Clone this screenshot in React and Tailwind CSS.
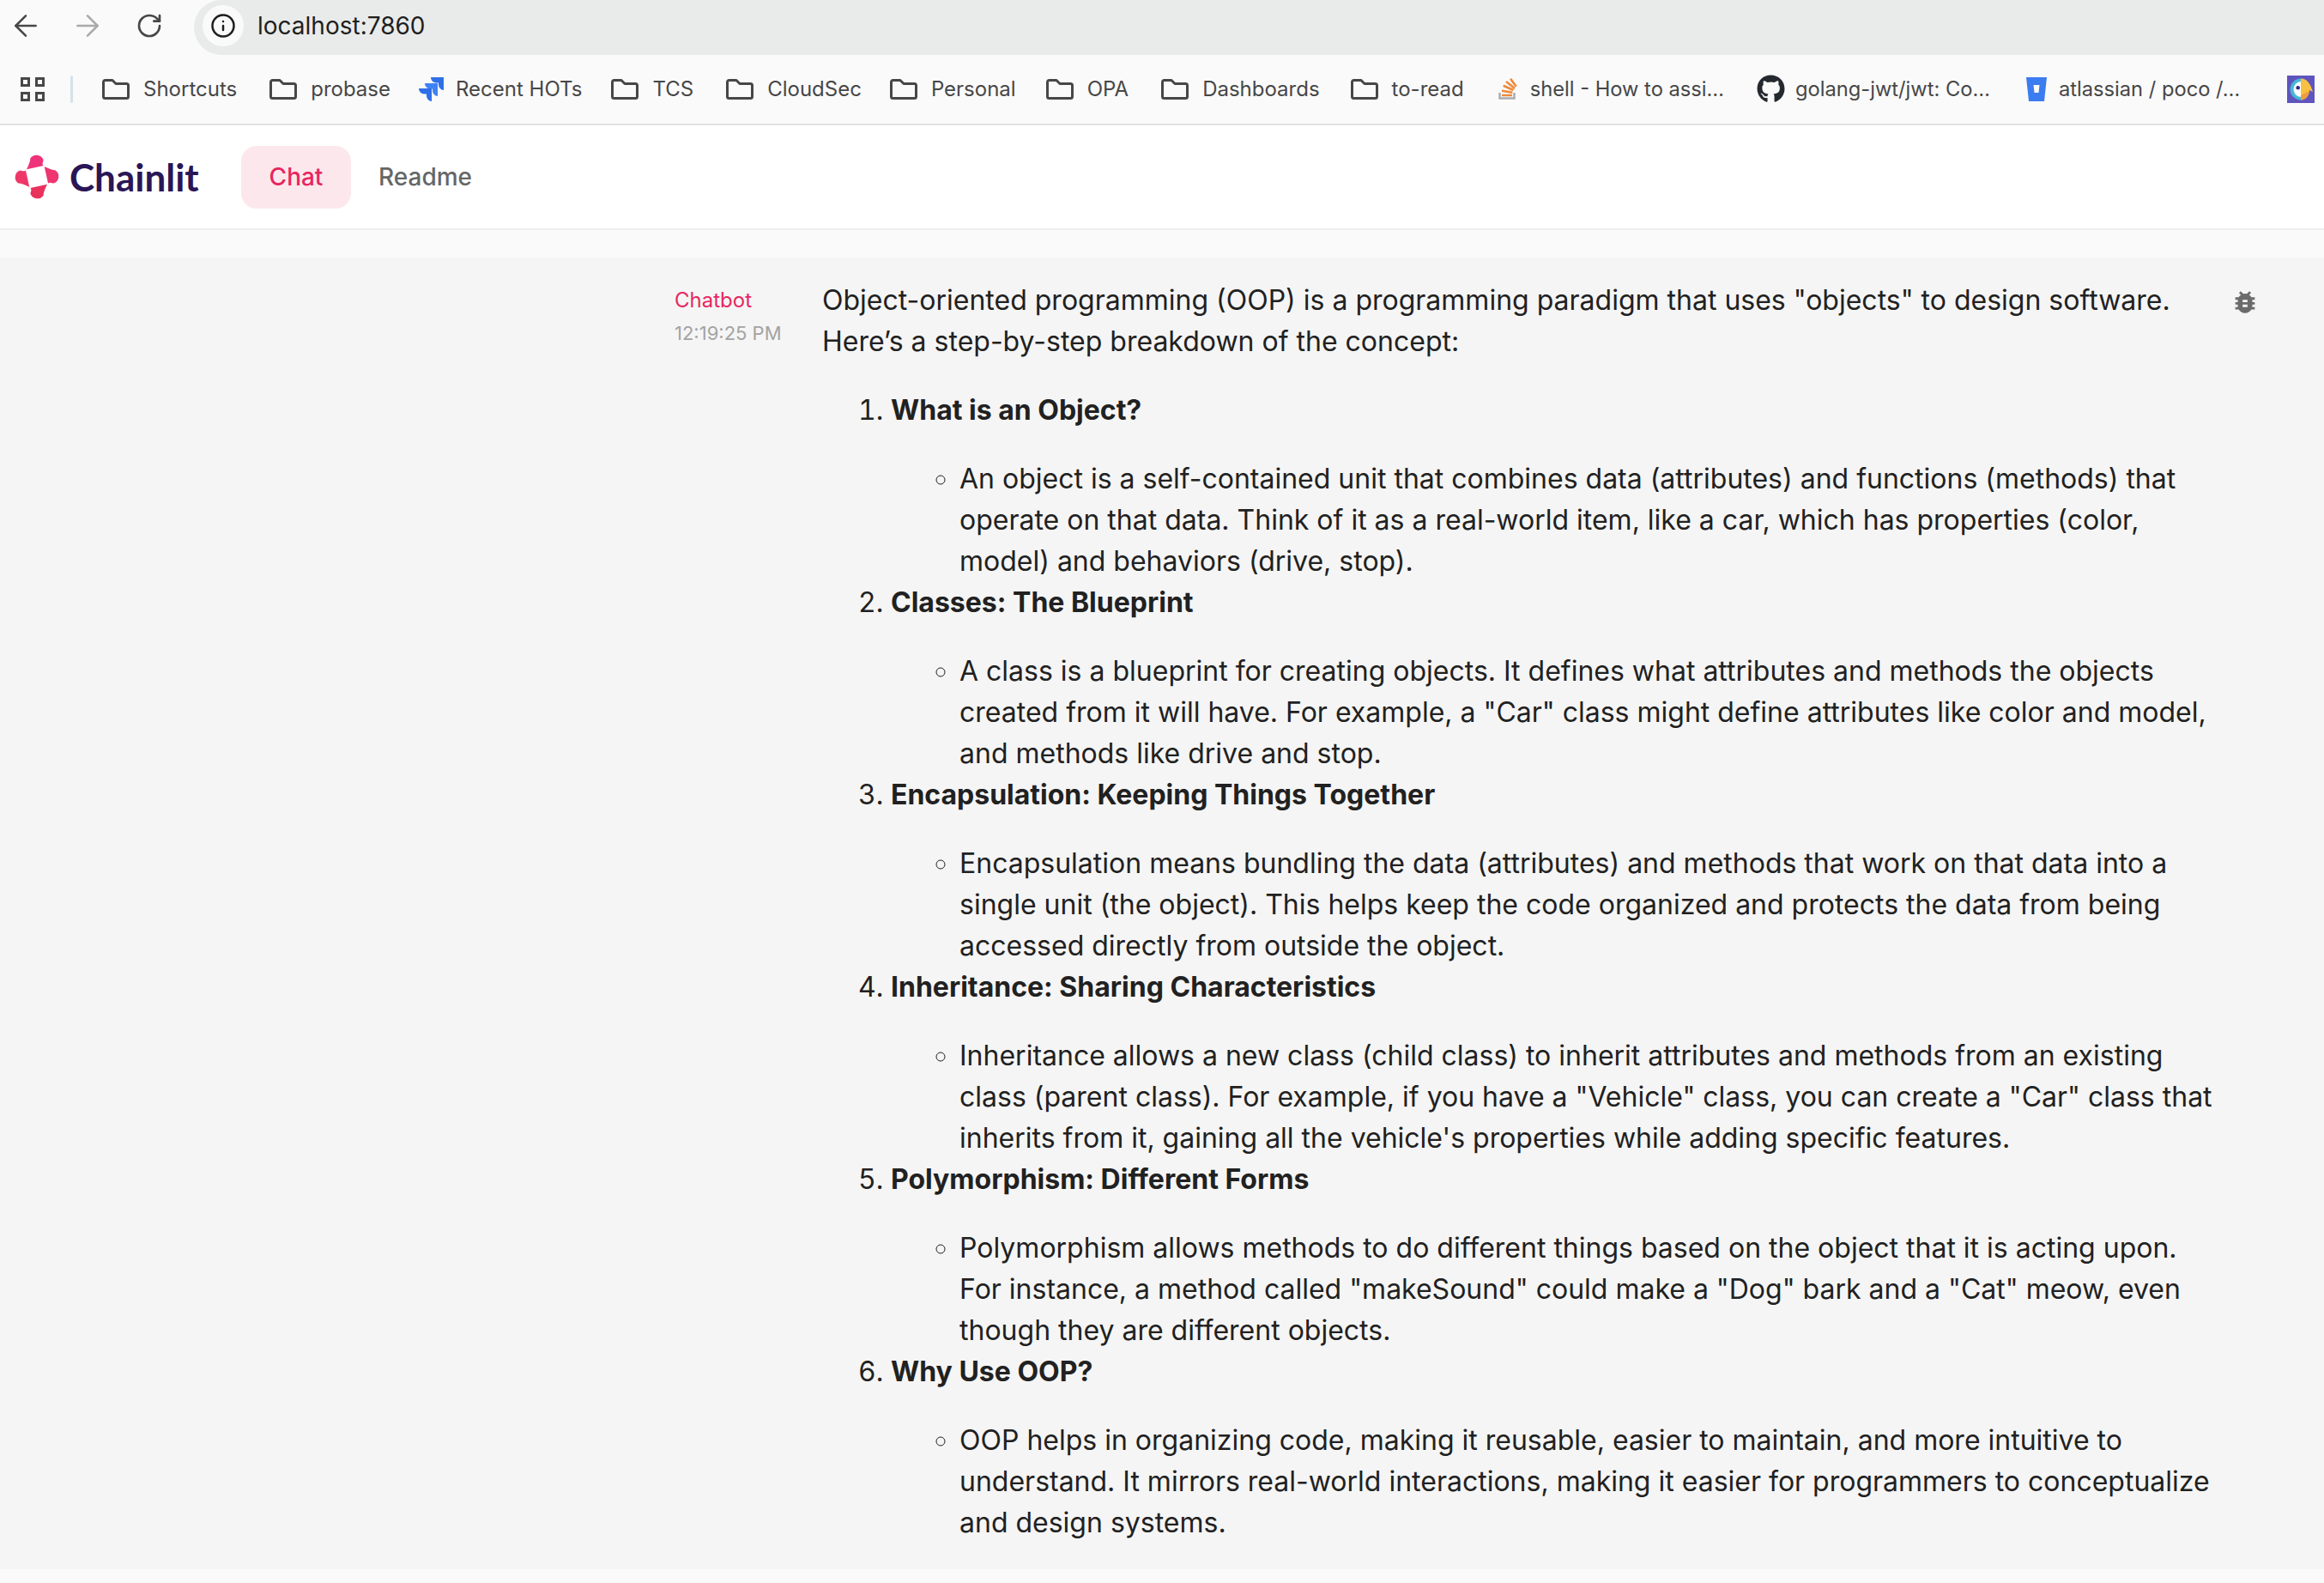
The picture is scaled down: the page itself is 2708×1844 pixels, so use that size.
import { ArrowLeft, ArrowRight, RotateCw, Info } from "lucide-react";
import { FaGithub } from "react-icons/fa";

const sections = [
  {
    title: "What is an Object?",
    body: 'An object is a self-contained unit that combines data (attributes) and functions (methods) that operate on that data. Think of it as a real-world item, like a car, which has properties (color, model) and behaviors (drive, stop).',
  },
  {
    title: "Classes: The Blueprint",
    body: 'A class is a blueprint for creating objects. It defines what attributes and methods the objects created from it will have. For example, a "Car" class might define attributes like color and model, and methods like drive and stop.',
  },
  {
    title: "Encapsulation: Keeping Things Together",
    body: "Encapsulation means bundling the data (attributes) and methods that work on that data into a single unit (the object). This helps keep the code organized and protects the data from being accessed directly from outside the object.",
  },
  {
    title: "Inheritance: Sharing Characteristics",
    body: 'Inheritance allows a new class (child class) to inherit attributes and methods from an existing class (parent class). For example, if you have a "Vehicle" class, you can create a "Car" class that inherits from it, gaining all the vehicle\'s properties while adding specific features.',
  },
  {
    title: "Polymorphism: Different Forms",
    body: 'Polymorphism allows methods to do different things based on the object that it is acting upon. For instance, a method called "makeSound" could make a "Dog" bark and a "Cat" meow, even though they are different objects.',
  },
  {
    title: "Why Use OOP?",
    body: "OOP helps in organizing code, making it reusable, easier to maintain, and more intuitive to understand. It mirrors real-world interactions, making it easier for programmers to conceptualize and design systems.",
  },
];

function FolderMark({ label, className = "" }) {
  return (
    <div className={`flex items-center gap-4 ${className}`}>
      <svg viewBox="0 0 32 24" className="h-[24px] w-[32px]" fill="none" stroke="#474747" strokeWidth="3" strokeLinejoin="round">
        <path d="M1.500 3.500A2 2 0 0 1 3.500 1.500h8.500l4 4h12.500a2 2 0 0 1 2 2v13a2 2 0 0 1-2 2H3.500a2 2 0 0 1-2-2z" />
      </svg>
      <span>{label}</span>
    </div>
  );
}

function JiraIcon() {
  return (
    <svg viewBox="0 0 30 30" className="h-[30px] w-[30px]">
      <path d="M29 1H14c0 3.500 2.800 6.500 6.300 6.500H23v2c0 3.500 2.800 6.500 6 6.500z" fill="#2f6fe8" />
      <path d="M22 8H7c0 3.500 2.800 6.500 6.300 6.500H16v2c0 3.500 2.800 6.500 6 6.500z" fill="#3f82f5" />
      <path d="M15 14H0c0 3.500 2.800 6.500 6.300 6.500H9v2c0 3.500 2.800 6.500 6 6.500z" fill="#2f6fe8" />
    </svg>
  );
}

function StackIcon() {
  return (
    <svg viewBox="0 0 22 26" className="h-[26px] w-[22px]" fill="none">
      <path d="M1.500 17v6.500h17V17" stroke="#a9adb3" strokeWidth="2.500" />
      <path d="M4 20h12M4 14.700l12.300 2M5.700 8.700L17.300 14M9 4l10 8M14 .7l6.700 9" stroke="#ee8a3a" strokeWidth="2.600" />
    </svg>
  );
}

function BitbucketIcon() {
  return (
    <svg viewBox="0 0 24 32" className="h-[32px] w-[24px]">
      <path d="M0 2h24l-3 28H3z" fill="#3b7cf0" />
      <path d="M8.500 11h7l-1 9h-5z" fill="#fafafa" />
    </svg>
  );
}

function ParrotIcon() {
  return (
    <svg viewBox="0 0 32 32" className="h-[32px] w-[32px]">
      <rect width="32" height="32" fill="#5f54bd" />
      <path d="M16 3.500a12.500 12.500 0 0 0 0 25z" fill="#45b8d8" />
      <path d="M16 7a8.500 9 0 0 0 0 18z" fill="#fff" />
      <path d="M16 3.500C23 3.500 27 9 30 19l-4-2c0 6-4 11.500-10 11.500z" fill="#f8c040" />
      <path d="M16 23l10-5c-1 6-5 10.500-10 10.500z" fill="#f09d3c" />
      <circle cx="12.700" cy="14.300" r="2.300" fill="#2d2a8a" />
    </svg>
  );
}

function ChainlitLogo() {
  const petal = "M-11-8L7-12C5-14 7-17 7-18A8 8 0 0 0-7-20C-7-17-9-12-11-8z";
  return (
    <svg viewBox="-23 -23 46 46" className="h-[50px] w-[50px] overflow-visible">
      <path d={petal} fill="#ef3279" />
      <path d={petal} fill="#ee3570" transform="rotate(90)" />
      <path d={petal} fill="#e9325c" transform="rotate(180)" />
      <path d={petal} fill="#ee3768" transform="rotate(270)" />
    </svg>
  );
}

function BugIcon() {
  return (
    <svg viewBox="0 0 24 24" className="h-[34px] w-[34px]" fill="#6b6b6b">
      <path d="M20 8h-2.810a5.985 5.985 0 0 0-1.820-1.960L17 4.410 15.590 3l-2.170 2.170a6 6 0 0 0-2.830 0L8.410 3 7 4.410l1.620 1.630C7.810 6.590 7.190 7.240 6.810 8H4v2h2.090c-.05.330-.09.660-.09 1v1H4v2h2v1c0 .340.040.670.090 1H4v2h2.810c1.040 1.790 2.970 3 5.190 3s4.150-1.210 5.190-3H20v-2h-2.090c.05-.330.090-.660.090-1v-1h2v-2h-2v-1c0-.340-.040-.670-.090-1H20V8zm-6 8h-4v-2h4v2zm0-4h-4v-2h4v2z" />
    </svg>
  );
}

export default function App() {
  return (
    <div className="min-h-screen bg-[#fafafa] font-['Inter',sans-serif] text-[#212121]">
      {/* browser chrome */}
      <div className="flex h-[64px] items-center bg-[#fafafa]">
        <div className="flex w-[226px] items-center pb-[4px] pl-[10px] text-[#474747]">
          <ArrowLeft className="h-[40px] w-[40px]" strokeWidth={1.5} />
          <ArrowRight className="ml-[32px] h-[40px] w-[40px] text-[#a9a9a9]" strokeWidth={1.5} />
          <RotateCw className="ml-[36px] h-[32px] w-[32px]" strokeWidth={2} />
        </div>
        <div className="flex h-full flex-1 items-center rounded-l-[32px] bg-[#e9ebeb] pb-[4px] pl-[10px]">
          <div className="flex h-[48px] w-[48px] items-center justify-center rounded-full bg-[#fafafa]">
            <Info className="h-[30px] w-[30px] text-[#1f1f1f]" strokeWidth={2} />
          </div>
          <span className="ml-[16px] text-[28px] text-[#1f1f1f]">localhost:7860</span>
        </div>
      </div>
      <div className="flex h-[82px] items-center whitespace-nowrap border-b-2 border-[#e2e2e2] bg-[#fafafa] pl-[24px] text-[24px] text-[#474747]">
        <div className="grid h-[28px] w-[28px] grid-cols-2 gap-[6px]">
          <span className="border-[3px] border-[#474747]" />
          <span className="border-[3px] border-[#474747]" />
          <span className="border-[3px] border-[#474747]" />
          <span className="border-[3px] border-[#474747]" />
        </div>
        <span className="ml-[30px] mr-[34px] h-[32px] w-[3px] rounded-full bg-[#d5e2ea]" />
        <div className="flex items-center gap-[38px]">
          <FolderMark label="Shortcuts" />
          <FolderMark label="probase" />
          <div className="-ml-[5px] flex items-center gap-[13px]">
            <JiraIcon />
            <span>Recent HOTs</span>
          </div>
          <FolderMark label="TCS" className="-ml-[4px]" />
          <FolderMark label="CloudSec" />
          <FolderMark label="Personal" className="-ml-[5px]" />
          <FolderMark label="OPA" className="-ml-[3px]" />
          <FolderMark label="Dashboards" />
          <FolderMark label="to-read" className="-ml-[2px]" />
          <div className="ml-[2px] flex items-center gap-[15px]">
            <StackIcon />
            <span className="text-[23.7px]">shell - How to assi…</span>
          </div>
          <div className="flex items-center gap-[12px]">
            <FaGithub className="h-[33px] w-[33px] text-[#24292f]" />
            <span className="text-[23.7px]">golang-jwt/jwt: Co…</span>
          </div>
          <div className="ml-[4px] flex items-center gap-[14px]">
            <BitbucketIcon />
            <span className="text-[23.7px]">atlassian / poco /…</span>
          </div>
          <div className="ml-[17px]">
            <ParrotIcon />
          </div>
        </div>
      </div>

      {/* app header */}
      <header className="flex h-[122px] items-center border-b-2 border-[#eeeeee] bg-white pl-[18px]">
        <ChainlitLogo />
        <span className="ml-[13px] w-[151px] font-['Lato',sans-serif] text-[44px] font-bold text-[#2a1656]">Chainlit</span>
        <div className="ml-[49px] flex h-[73px] w-[128px] items-center justify-center rounded-[18px] bg-[#fce8ec] text-[28px] font-medium text-[#e8265f]">
          Chat
        </div>
        <div className="ml-[32px] text-[28px] font-medium text-[#666666]">Readme</div>
      </header>

      {/* message */}
      <main className="mt-[32px] flex h-[1528px] overflow-hidden bg-[#f5f5f5] pl-[786px] pt-[26px]">
        <div className="w-[172px] shrink-0">
          <div className="flex h-[48px] items-center text-[24px] text-[#e8265f]">Chatbot</div>
          <div className="mt-[-2px] text-[22px] leading-[32px] text-[#a3a3a3]">12:19:25 PM</div>
        </div>
        <div className="w-[1630px] shrink-0 text-[32px] leading-[48px]">
          <p className="mb-[32px]">
            Object-oriented programming (OOP) is a programming paradigm that uses "objects" to design software. Here’s a step-by-step breakdown of the concept:
          </p>
          <ol className="list-decimal pl-[80px]">
            {sections.map((s) => (
              <li key={s.title}>
                <p className="mb-[32px] font-bold">{s.title}</p>
                <ul className="list-[circle] pl-[80px]">
                  <li>{s.body}</li>
                </ul>
              </li>
            ))}
          </ol>
        </div>
        <div className="ml-[11px] mt-[9px]">
          <BugIcon />
        </div>
      </main>
    </div>
  );
}
